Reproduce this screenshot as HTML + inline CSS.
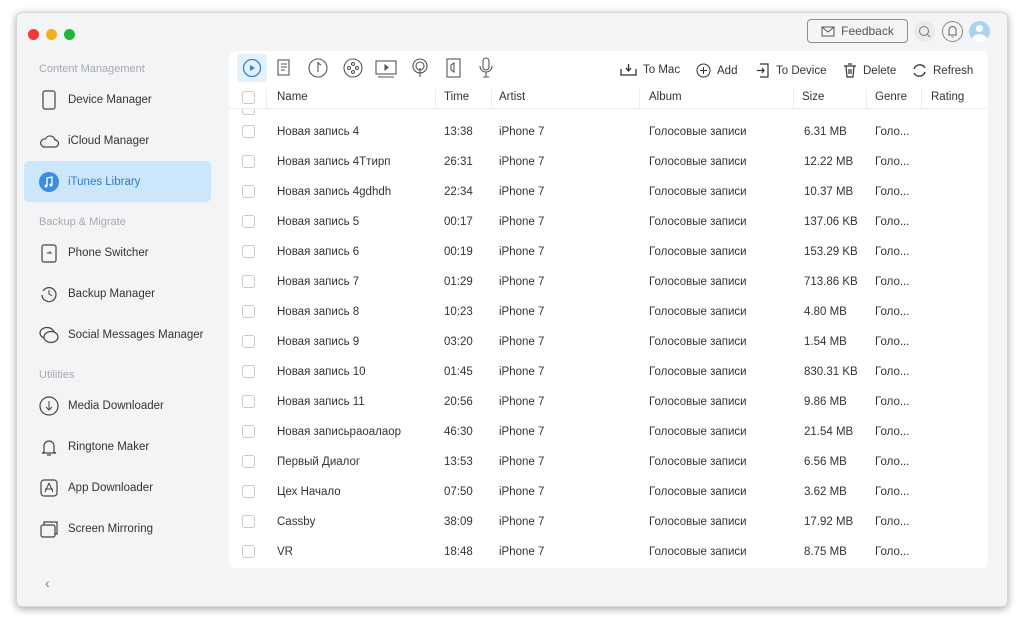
<!DOCTYPE html><html><head><meta charset="utf-8"><style>
*{margin:0;padding:0;box-sizing:border-box}
body{width:1024px;height:627px;background:#fff;font-family:"Liberation Sans","Noto Sans CJK SC",sans-serif;position:relative;overflow:hidden;color:#333}
.win{position:absolute;left:16px;top:12px;width:992px;height:595px;background:#f3f4f6;border-radius:6px;box-shadow:0 2px 8px rgba(0,0,0,.35);border:1px solid #d8d8d8}
.dot{position:absolute;top:16px;width:11px;height:11px;border-radius:50%}
.sec{position:absolute;left:22px;font-size:11px;color:#a6a9ad}
.item{position:absolute;left:7px;width:187px;height:41px;font-size:11.5px;color:#333;display:flex;align-items:center;border-radius:5px;white-space:nowrap}
.item svg{margin-left:14px;margin-right:8px;width:22px;height:22px;flex:none}
.item.sel{background:#cce6fb;color:#2b7bd0}
.panel{position:absolute;left:212px;top:38px;width:759px;height:517px;background:#fff;border-radius:6px;overflow:hidden}
.t{position:absolute;font-size:11.5px;color:#333;white-space:nowrap}
.cb{position:absolute;left:13px;width:13px;height:13px;border:1px solid #c9c9c9;border-radius:3px;background:#fff}
.hd{position:absolute;top:36px;left:0;width:759px;height:22px;border-bottom:1px solid #eee}
.sep{position:absolute;top:38px;width:1px;height:20px;background:#ececec}
.tb{position:absolute;top:12px;font-size:11.5px;color:#333;display:flex;align-items:center;gap:6px}
</style></head><body>
<div class="win">
<div class="dot" style="left:11px;background:#ee3b36"></div>
<div class="dot" style="left:29px;background:#f3ae22"></div>
<div class="dot" style="left:47px;background:#27b33b"></div>
<div style="position:absolute;left:790px;top:6px;width:101px;height:24px;border:1px solid #8d8d8d;border-radius:4px;font-size:12px;color:#555;display:flex;align-items:center;justify-content:center;gap:6px"><svg width="14" height="11"><rect x="1" y="1" width="12" height="9" fill="none" stroke="#555"/><path d="M1 1l6 5 6-5" fill="none" stroke="#555"/></svg>Feedback</div>
<div style="position:absolute;left:897px;top:8px;width:21px;height:21px;border-radius:50%;background:#eaeaea"><svg width="21" height="21"><circle cx="10" cy="10" r="4.5" fill="none" stroke="#777"/><path d="M13.5 13.5l2.5 2.5" stroke="#777"/></svg></div>
<div style="position:absolute;left:925px;top:8px;width:21px;height:21px;border-radius:50%;border:1px solid #888"><svg width="19" height="19"><path d="M6 13V8a3.5 3.5 0 017 0v5zM5 13h9M8.5 15h2" fill="none" stroke="#666"/></svg></div>
<div style="position:absolute;left:952px;top:8px;width:21px;height:21px;border-radius:50%;background:#a9d3f3;overflow:hidden"><div style="position:absolute;left:7px;top:4px;width:7px;height:7px;border-radius:50%;background:#fff"></div><div style="position:absolute;left:3px;top:13px;width:15px;height:12px;border-radius:50%;background:#fff"></div></div>

<div class="sec" style="top:50px">Content Management</div>
<div class="item" style="top:66px"><svg viewBox="0 0 22 22"><rect x="5" y="2" width="12" height="18" rx="2" fill="none" stroke="#444" stroke-width="1.2"/></svg>Device Manager</div>
<div class="item" style="top:107px"><svg viewBox="0 0 22 22"><path d="M6 17h11a3.5 3.5 0 000-7 5 5 0 00-9.5-1A4 4 0 006 17z" fill="none" stroke="#444" stroke-width="1.2"/></svg>iCloud Manager</div>
<div class="item sel" style="top:148px"><svg viewBox="0 0 22 22"><circle cx="11" cy="11" r="10" fill="#3b8de0"/><path d="M9 15V7l5-1v8" fill="none" stroke="#fff" stroke-width="1.3"/><circle cx="8" cy="15" r="1.5" fill="#fff"/><circle cx="13" cy="14" r="1.5" fill="#fff"/></svg>iTunes Library</div>
<div class="sec" style="top:203px">Backup &amp; Migrate</div>
<div class="item" style="top:219px"><svg viewBox="0 0 22 22"><rect x="4" y="3" width="14" height="17" rx="2" fill="none" stroke="#444" stroke-width="1.2"/><path d="M9 11h4l-1.5-1.5" fill="none" stroke="#444"/></svg>Phone Switcher</div>
<div class="item" style="top:260px"><svg viewBox="0 0 22 22"><path d="M5 8a7 7 0 11-1 4" fill="none" stroke="#444" stroke-width="1.2"/><path d="M11 7v4l3 2" fill="none" stroke="#444"/></svg>Backup Manager</div>
<div class="item" style="top:301px"><svg viewBox="0 0 22 22"><ellipse cx="9" cy="9" rx="7" ry="5.5" fill="none" stroke="#444" stroke-width="1.2"/><ellipse cx="13" cy="13" rx="7" ry="5.5" fill="#f3f4f6" stroke="#444" stroke-width="1.2"/></svg>Social Messages Manager</div>
<div class="sec" style="top:356px">Utilities</div>
<div class="item" style="top:372px"><svg viewBox="0 0 22 22"><circle cx="11" cy="11" r="9" fill="none" stroke="#444" stroke-width="1.2"/><path d="M11 6v9M8 12l3 3 3-3" fill="none" stroke="#444"/></svg>Media Downloader</div>
<div class="item" style="top:413px"><svg viewBox="0 0 22 22"><path d="M6 16V10a5 5 0 0110 0v6l2 1H4zM9 19h4" fill="none" stroke="#444" stroke-width="1.2"/></svg>Ringtone Maker</div>
<div class="item" style="top:454px"><svg viewBox="0 0 22 22"><rect x="3" y="3" width="16" height="16" rx="3" fill="none" stroke="#444" stroke-width="1.2"/><path d="M11 6l-4 9M11 6l4 9M7 12h8" fill="none" stroke="#444"/></svg>App Downloader</div>
<div class="item" style="top:495px"><svg viewBox="0 0 22 22"><rect x="3" y="7" width="14" height="12" rx="2" fill="none" stroke="#444" stroke-width="1.2"/><path d="M6 7V4h13v12h-2" fill="none" stroke="#444" stroke-width="1.2"/></svg>Screen Mirroring</div>
<div style="position:absolute;left:28px;top:562px;color:#777;font-size:14px">‹</div>

<div class="panel">
<div style="position:absolute;left:8px;top:3px;width:30px;height:28px;background:#e4f1fc;border-radius:3px"></div>
<svg style="position:absolute;left:0;top:0" width="280" height="36">
<circle cx="23" cy="17" r="8.5" fill="none" stroke="#2b86d9" stroke-width="1.3"/><path d="M21 14v6l5-3z" fill="#2b86d9"/>
<g fill="none" stroke="#555" stroke-width="1.1"><rect x="49" y="9" width="11" height="15"/><path d="M52 13h6M52 16h6M52 19h4"/>
<circle cx="89" cy="17" r="9"/><path d="M89 11v10M89 12l3 2"/>
<circle cx="124" cy="17" r="9"/><circle cx="124" cy="13" r="1.5"/><circle cx="120" cy="17" r="1.5"/><circle cx="128" cy="17" r="1.5"/><circle cx="124" cy="21" r="1.5"/>
<rect x="147" y="10" width="20" height="13"/><path d="M149 26h16"/><path d="M156 14v5l3-2.5z" fill="#555"/>
<circle cx="191" cy="15" r="7"/><circle cx="191" cy="15" r="4"/><path d="M191 17v9"/>
<rect x="218" y="8" width="13" height="18"/><path d="M222 14v5l3 2v-9z"/>
<rect x="254" y="7" width="6" height="12" rx="3"/><path d="M251 15a6 6 0 0012 0M257 21v5M254 26h6"/></g></svg>
<div class="tb" style="left:391px"><svg width="17" height="13"><path d="M1 6v6h15V6M8.5 1v7M6 5l2.5 3 2.5-3" fill="none" stroke="#333" stroke-width="1.3"/></svg>To Mac</div>
<div class="tb" style="left:467px"><svg width="15" height="15"><circle cx="7.5" cy="7.5" r="6.5" fill="none" stroke="#333"/><path d="M7.5 4v7M4 7.5h7" stroke="#333"/></svg>Add</div>
<div class="tb" style="left:527px"><svg width="14" height="15"><path d="M4 1h8v13H4M1 7.5h7M6 5l2 2.5-2 2.5" fill="none" stroke="#333" stroke-width="1.2"/></svg>To Device</div>
<div class="tb" style="left:614px"><svg width="14" height="15"><path d="M1 3h12M3 3l1 11h6l1-11M5 1h4M6 6v5M8 6v5" fill="none" stroke="#333" stroke-width="1.2"/></svg>Delete</div>
<div class="tb" style="left:683px"><svg width="15" height="15"><path d="M2 6a6 6 0 0111-1M13 9a6 6 0 01-11 1" fill="none" stroke="#333" stroke-width="1.3"/></svg>Refresh</div>
<div class="cb" style="top:51px"></div>
<div class="hd" style="background:#fff"></div>
<div class="cb" style="top:40px"></div>
<div class="sep" style="left:37px"></div><div class="sep" style="left:206px"></div><div class="sep" style="left:262px"></div><div class="sep" style="left:410px"></div><div class="sep" style="left:564px"></div><div class="sep" style="left:637px"></div><div class="sep" style="left:692px"></div>
<div class="t" style="left:48px;top:40px">Name</div><div class="t" style="left:215px;top:40px">Time</div><div class="t" style="left:270px;top:40px">Artist</div><div class="t" style="left:420px;top:40px">Album</div><div class="t" style="left:573px;top:40px">Size</div><div class="t" style="left:646px;top:40px">Genre</div><div class="t" style="left:702px;top:40px">Rating</div>
<div id="rows"></div>
</div>
</div>
<script>
var d=[["Новая запись 4","13:38","6.31 MB"],["Новая запись 4Ттирп","26:31","12.22 MB"],["Новая запись 4gdhdh","22:34","10.37 MB"],["Новая запись 5","00:17","137.06 KB"],["Новая запись 6","00:19","153.29 KB"],["Новая запись 7","01:29","713.86 KB"],["Новая запись 8","10:23","4.80 MB"],["Новая запись 9","03:20","1.54 MB"],["Новая запись 10","01:45","830.31 KB"],["Новая запись 11","20:56","9.86 MB"],["Новая записьраоалаор","46:30","21.54 MB"],["Первый Диалог","13:53","6.56 MB"],["Цех Начало","07:50","3.62 MB"],["Cassby","38:09","17.92 MB"],["VR","18:48","8.75 MB"]];
var h='';d.forEach(function(r,i){var y=75+30*i;h+='<div class="cb" style="top:'+(y-1)+'px"></div><div class="t" style="left:48px;top:'+y+'px">'+r[0]+'</div><div class="t" style="left:215px;top:'+y+'px">'+r[1]+'</div><div class="t" style="left:270px;top:'+y+'px">iPhone 7</div><div class="t" style="left:420px;top:'+y+'px">Голосовые записи</div><div class="t" style="left:575px;top:'+y+'px">'+r[2]+'</div><div class="t" style="left:646px;top:'+y+'px">Голо...</div>';});
document.getElementById('rows').innerHTML=h;
</script>
</body></html>
